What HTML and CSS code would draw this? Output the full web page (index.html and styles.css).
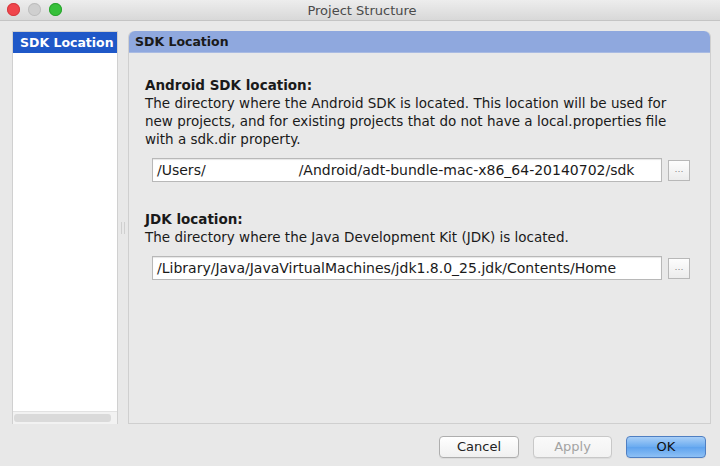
FILE: index.html
```html
<!DOCTYPE html>
<html>
<head>
<meta charset="utf-8">
<link rel="stylesheet" href="styles.css">
</head>
<body>
<div class="window">
  <div class="titlebar">
    <div class="lights">
      <span class="light red"></span>
      <span class="light gray"></span>
      <span class="light green"></span>
    </div>
    <div class="title">Project Structure</div>
  </div>
  <div class="main">
    <div class="sidebar">
      <div class="item selected">SDK Location</div>
      <div class="list-fill"></div>
      <div class="hscroll"><div class="thumb"></div></div>
    </div>
    <div class="splitter"><div class="grip"></div></div>
    <div class="panel">
      <div class="panel-header">SDK Location</div>
      <div class="panel-body">
        <div class="section">
          <div class="label">Android SDK location:</div>
          <div class="desc">The directory where the Android SDK is located. This location will be used for new projects, and for existing projects that do not have a local.properties file with a sdk.dir property.</div>
          <div class="field-row">
            <div class="field"><span>/Users/</span><span class="gap"></span><span>/Android/adt-bundle-mac-x86_64-20140702/sdk</span></div>
            <div class="browse">…</div>
          </div>
        </div>
        <div class="section jdk">
          <div class="label">JDK location:</div>
          <div class="desc">The directory where the Java Development Kit (JDK) is located.</div>
          <div class="field-row">
            <div class="field"><span>/Library/Java/JavaVirtualMachines/jdk1.8.0_25.jdk/Contents/Home</span></div>
            <div class="browse">…</div>
          </div>
        </div>
      </div>
    </div>
  </div>
  <div class="footer">
    <div class="btn">Cancel</div>
    <div class="btn disabled">Apply</div>
    <div class="btn primary">OK</div>
  </div>
</div>
</body>
</html>
```

FILE: styles.css
```css
html, body {
  margin: 0;
  padding: 0;
}
*, *::before, *::after {
  box-sizing: border-box;
}
body {
  width: 720px;
  height: 466px;
  overflow: hidden;
  background: #e8e8e8;
  font-family: "DejaVu Sans", "Noto Sans", sans-serif;
  font-size: 13.5px;
  color: #1a1a1a;
}
.window {
  height: 466px;
  display: flex;
  flex-direction: column;
}
.titlebar {
  height: 21px;
  flex: none;
  position: relative;
  background: linear-gradient(#ededed, #d8d8d8);
  border-bottom: 1px solid #c4c4c4;
  display: flex;
  align-items: center;
  justify-content: center;
}
.lights {
  position: absolute;
  left: 7px;
  top: 3px;
  display: flex;
  gap: 8px;
}
.light {
  width: 13px;
  height: 13px;
  border-radius: 50%;
  display: block;
}
.red { background: #f0454c; box-shadow: inset 0 0 0 1px #d33a3f; }
.gray { background: #cfcfcf; box-shadow: inset 0 0 0 1px #bdbdbd; }
.green { background: #36c03a; box-shadow: inset 0 0 0 1px #2aa12e; }
.title {
  font-size: 13px;
  color: #4a4a4a;
  margin-left: 4px;
}
.main {
  flex: 1;
  display: flex;
  padding: 10px 9px 0 12px;
  min-height: 0;
}
.sidebar {
  width: 106px;
  flex: none;
  background: #ffffff;
  border: 1px solid #d0d0d0;
  border-bottom: none;
  display: flex;
  flex-direction: column;
}
.item {
  height: 21px;
  line-height: 21px;
  padding-left: 7px;
  font-size: 12.5px;
}
.item.selected {
  background: #1f58c8;
  color: #ffffff;
  font-weight: bold;
}
.list-fill { flex: 1; }
.hscroll {
  height: 13px;
  background: #f2f2f2;
  border-top: 1px solid #e2e2e2;
  padding: 2px 6px 0 1px;
}
.thumb {
  height: 8px;
  border-radius: 3px;
  background: #dadada;
}
.splitter {
  width: 10px;
  flex: none;
  display: flex;
  align-items: center;
  justify-content: center;
}
.grip {
  width: 4px;
  height: 12px;
  border-left: 1px solid #cfcfcf;
  border-right: 1px solid #cfcfcf;
}
.panel {
  flex: 1;
  min-width: 0;
  display: flex;
  flex-direction: column;
  border: 1px solid #cfcfcf;
  border-top: none;
  border-radius: 6px 6px 0 0;
  background: #e9e9e9;
}
.panel-header {
  height: 22px;
  line-height: 21px;
  background: #8fa8de;
  border-bottom: 1px solid #a9bbe3;
  border-radius: 6px 6px 0 0;
  padding-left: 6px;
  font-weight: bold;
  font-size: 12.5px;
  color: #1a1a1a;
}
.panel-body {
  padding: 23px 20px 0 16px;
}
.label {
  font-weight: bold;
  line-height: 18px;
}
.desc {
  line-height: 18px;
  width: 550px;
}
.field-row {
  display: flex;
  align-items: center;
  margin-top: 10px;
  padding-left: 7px;
}
.field {
  width: 510px;
  flex: none;
  height: 24px;
  line-height: 22px;
  background: #ffffff;
  border: 1px solid #b8b8b8;
  box-shadow: inset 0 1px 1px rgba(0,0,0,0.1);
  padding-left: 4px;
  font-size: 14px;
  display: flex;
  white-space: nowrap;
  overflow: hidden;
}
.gap {
  width: 93px;
}
.browse {
  margin-left: 6px;
  width: 22px;
  height: 21px;
  border: 1px solid #b8b8b8;
  background: linear-gradient(#fdfdfd, #ececec);
  color: #8a8a8a;
  font-size: 9px;
  line-height: 17px;
  text-align: center;
}
.jdk {
  margin-top: 28px;
}
.jdk .field-row { margin-top: 10px; }
.footer {
  height: 42px;
  flex: none;
  display: flex;
  justify-content: flex-end;
  align-items: flex-start;
  padding: 12px 14px 0 0;
  gap: 14px;
}
.btn {
  width: 80px;
  height: 22px;
  line-height: 20px;
  text-align: center;
  border: 1px solid #aeaeae;
  border-radius: 4px;
  background: linear-gradient(#ffffff, #f0f0f0);
  font-size: 13px;
  color: #222;
  box-shadow: 0 1px 0 rgba(0,0,0,0.05);
}
.btn.disabled {
  width: 79px;
  color: #a3a3a3;
  border-color: #c8c8c8;
  background: linear-gradient(#fafafa, #f2f2f2);
}
.btn.primary {
  border-color: #4f7fc2;
  background: linear-gradient(#a9cff7, #6aabf0 50%, #5fa3ee 51%, #8dc0f5);
  color: #111;
}
```
